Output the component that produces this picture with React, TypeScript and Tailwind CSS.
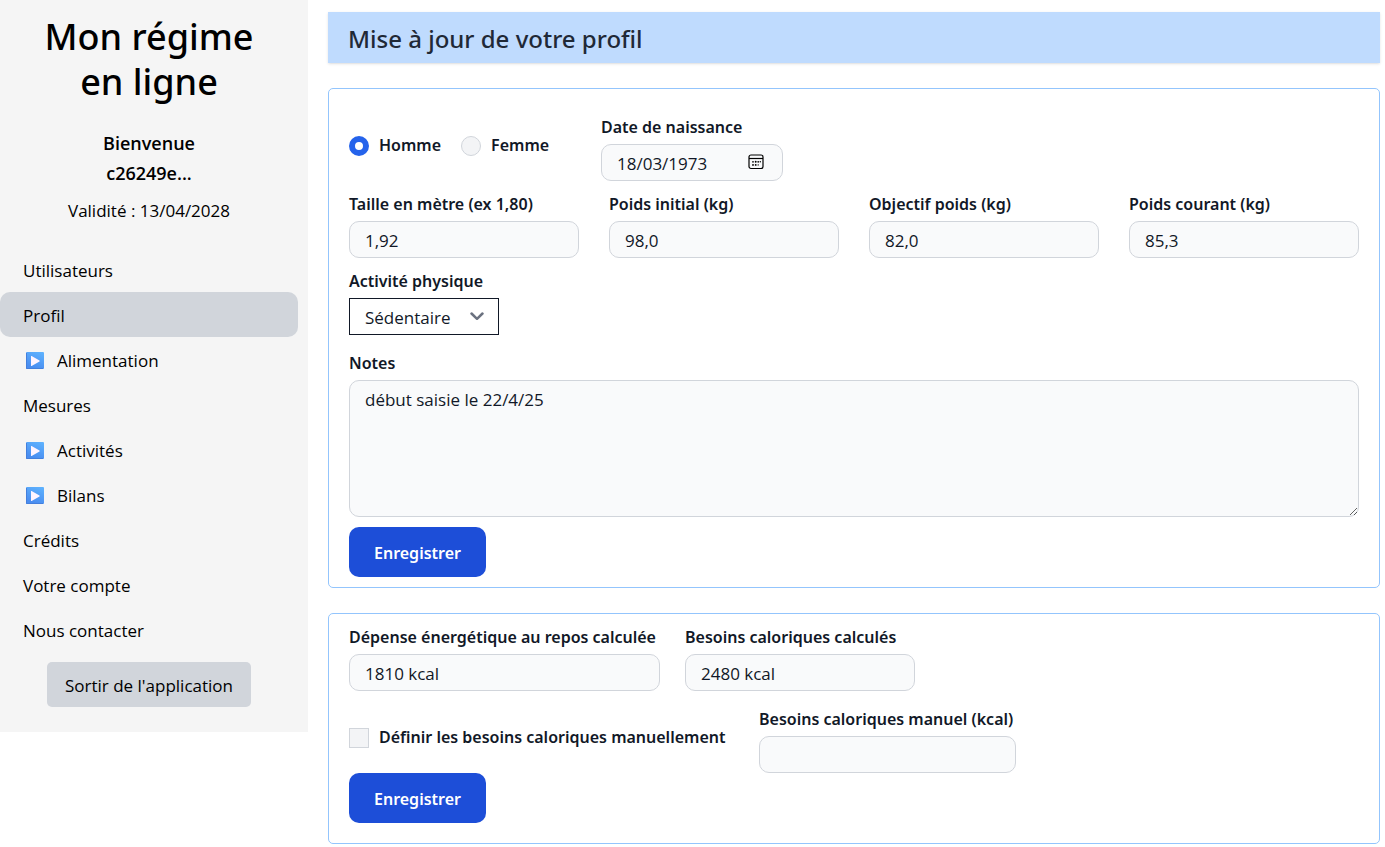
import React, { useState } from 'react';

const menuItems = [
  { label: 'Utilisateurs' },
  { label: 'Profil' },
  { label: 'Alimentation', hasSubMenu: true },
  { label: 'Mesures' },
  { label: 'Activités', hasSubMenu: true },
  { label: 'Bilans', hasSubMenu: true },
  { label: 'Crédits' },
  { label: 'Votre compte' },
  { label: 'Nous contacter' },
];

const inputClass =
  'block h-[37px] w-full rounded-[10px] border border-[#d1d5db] bg-[#f9fafb] px-[15px] pt-[2px] text-[17px] leading-[25px] text-[#111827]';
const labelClass =
  "mb-[3px] block whitespace-nowrap font-['Noto_Sans',sans-serif] text-[16px] leading-[27px] font-semibold text-[#111827]";
const checkLabelClass =
  "flex items-center gap-[10px] font-['Noto_Sans',sans-serif] text-[16px] leading-[25px] font-semibold text-[#111827]";

function PlayIcon() {
  return (
    <svg width="18" height="18" viewBox="0 0 18 18" aria-hidden="true">
      <defs>
        <linearGradient id="play" x1="1" y1="0" x2="0.6" y2="1">
          <stop offset="0" stopColor="#5fb4ff" />
          <stop offset="1" stopColor="#4a8df0" />
        </linearGradient>
      </defs>
      <rect width="18" height="17" rx="1" fill="url(#play)" />
      <path d="M0.5 1v15.500H17" fill="none" stroke="#447fdc" strokeWidth="1" />
      <path d="M5 4.300v9.400c0 .4.3.5.6.3l7.900-4.600c.3-.2.3-.6 0-.8L5.600 4c-.3-.2-.6 0-.6.3z" fill="#fff4ff" />
    </svg>
  );
}

function CalendarIcon() {
  return (
    <svg width="16" height="16" viewBox="0 0 16 16" fill="none" aria-hidden="true">
      <rect x="1" y="1" width="14" height="13.500" rx="2" stroke="#000" strokeWidth="1.200" />
      <path d="M1 4.500h14" stroke="#000" strokeWidth="1.200" />
      <g fill="#000">
        <circle cx="5" cy="7.800" r="0.850" />
        <circle cx="7.700" cy="7.800" r="0.950" />
        <circle cx="10.200" cy="7.800" r="0.850" />
        <circle cx="12.300" cy="7.800" r="0.700" />
        <circle cx="5" cy="10.900" r="0.950" />
        <circle cx="7.700" cy="10.900" r="0.950" />
        <circle cx="10.200" cy="10.900" r="0.700" />
      </g>
    </svg>
  );
}

interface FieldProps {
  id: string;
  label: string;
  value?: string;
  className: string;
}

function Field({ id, label, value = '', className }: FieldProps) {
  return (
    <div className={className}>
      <label htmlFor={id} className={labelClass}>{label}</label>
      <input id={id} type="text" defaultValue={value} className={inputClass} />
    </div>
  );
}

function SaveButton() {
  return (
    <button
      type="submit"
      className="block h-[50px] rounded-[10px] bg-[#1d4ed8] px-[25px] pt-[2px] font-['Noto_Sans',sans-serif] text-[16px] leading-[25px] font-semibold text-white hover:bg-blue-800"
    >
      Enregistrer
    </button>
  );
}

function Sidebar() {
  const [current, setCurrent] = useState('Profil');

  return (
    <aside className="w-[308px] shrink-0 bg-[#f5f5f5] pt-[14px] pr-[10px] pb-[25px] text-black">
      <h1 className="text-center font-['Noto_Sans',sans-serif] text-[36px] leading-[45px] font-medium">
        Mon régime<br />en ligne
      </h1>
      <div className="pt-6 pb-[10px] text-center text-[18px] leading-[30px] font-semibold">
        <p>Bienvenue</p>
        <p>c26249e...</p>
      </div>
      <p className="text-center text-[17px] leading-[25px]">Validité : 13/04/2028</p>
      <nav className="mt-6">
        {menuItems.map((item) => (
          <a
            key={item.label}
            href="#"
            onClick={() => setCurrent(item.label)}
            className={`flex h-[45px] items-center rounded-[10px] px-[23px] pt-[2px] text-[17px] ${current === item.label ? 'bg-[#d1d5db]' : ''}`}
          >
            {item.hasSubMenu && (
              <span className="mr-[13px] ml-[3px]">
                <PlayIcon />
              </span>
            )}
            {item.label}
          </a>
        ))}
      </nav>
      <button type="button" className="mx-auto mt-[10px] block h-[45px] rounded-[5px] bg-[#d1d5db] px-[18px] pt-[2px] text-[17px]">
        Sortir de l'application
      </button>
    </aside>
  );
}

export default function App() {
  const [sex, setSex] = useState('homme');
  const [manual, setManual] = useState(false);

  return (
    <div className="flex items-start bg-white font-['Open_Sans',sans-serif]">
      <Sidebar />

      <main className="min-w-0 flex-1 pt-3 pr-[5px] pl-5">
        <h2 className="bg-[#bfdbfe] px-5 pt-[11px] pb-[9px] font-['Noto_Sans',sans-serif] text-[24px] leading-[31px] font-medium text-[#1f2937] shadow-sm">
          Mise à jour de votre profil
        </h2>

        <form onSubmit={(e) => e.preventDefault()} className="mt-[25px] rounded-[5px] border border-[#93c5fd] px-5 pt-[25px] pb-[10px]">
          <div className="flex items-center">
            <div className="flex w-[252px] gap-5 pb-1">
              {['Homme', 'Femme'].map((name) => (
                <label key={name} className={checkLabelClass}>
                  <input
                    type="radio"
                    name="sexe"
                    checked={sex === name.toLowerCase()}
                    onChange={() => setSex(name.toLowerCase())}
                    className="size-5 appearance-none rounded-full border border-[#d1d5db] bg-[#f3f4f6] checked:border-[6px] checked:border-[#2563eb] checked:bg-white"
                  />
                  {name}
                </label>
              ))}
            </div>
            <div className="w-[182px]">
              <label htmlFor="naissance" className={labelClass}>Date de naissance</label>
              <div className="relative">
                <input id="naissance" type="text" defaultValue="18/03/1973" className={inputClass} />
                <button type="button" aria-label="Calendrier" className="absolute top-[10px] right-[19px]">
                  <CalendarIcon />
                </button>
              </div>
            </div>
          </div>

          <div className="mt-[10px] flex gap-[30px]">
            <Field id="taille" label="Taille en mètre (ex 1,80)" value="1,92" className="w-[230px]" />
            <Field id="initial" label="Poids initial (kg)" value="98,0" className="w-[230px]" />
            <Field id="objectif" label="Objectif poids (kg)" value="82,0" className="w-[230px]" />
            <Field id="courant" label="Poids courant (kg)" value="85,3" className="w-[230px]" />
          </div>

          <div className="mt-[10px]">
            <label htmlFor="activite" className={labelClass}>Activité physique</label>
            <div className="relative w-[150px]">
              <select
                id="activite"
                className="block h-[37px] w-full appearance-none border border-[#111827] bg-white px-[15px] pt-[2px] text-[17px] leading-[25px] text-[#111827]"
              >
                <option>Sédentaire</option>
                <option>Actif</option>
              </select>
              <svg className="pointer-events-none absolute top-[13px] right-[15px]" width="14" height="10" viewBox="0 0 14 10" fill="none" aria-hidden="true">
                <path d="M1.500 2.500 7 7.800 12.500 2.500" stroke="#6b7280" strokeWidth="2.500" strokeLinecap="round" strokeLinejoin="round" />
              </svg>
            </div>
          </div>

          <div className="mt-[15px]">
            <label htmlFor="notes" className={labelClass}>Notes</label>
            <textarea
              id="notes"
              defaultValue="début saisie le 22/4/25"
              className="block h-[137px] w-full rounded-[10px] border border-[#d1d5db] bg-[#f9fafb] px-[15px] py-[6px] text-[17px] leading-[25px] text-[#111827]"
            />
          </div>

          <div className="mt-[10px]">
            <SaveButton />
          </div>
        </form>

        <form onSubmit={(e) => e.preventDefault()} className="mt-[25px] rounded-[5px] border border-[#93c5fd] px-5 pt-[10px] pb-5">
          <div className="flex gap-[25px]">
            <Field id="depense" label="Dépense énergétique au repos calculée" value="1810 kcal" className="w-[311px]" />
            <Field id="besoins" label="Besoins caloriques calculés" value="2480 kcal" className="w-[230px]" />
          </div>

          <div className="mt-[15px] flex items-center">
            <div className="w-[410px] pb-1">
              <label className={checkLabelClass}>
                <input
                  type="checkbox"
                  checked={manual}
                  onChange={() => setManual(!manual)}
                  className="size-5 appearance-none border border-[#d1d5db] bg-[#f3f4f6] checked:bg-[#2563eb]"
                />
                Définir les besoins caloriques manuellement
              </label>
            </div>
            <Field id="manuel" label="Besoins caloriques manuel (kcal)" className="w-[257px]" />
          </div>

          <SaveButton />
        </form>
      </main>
    </div>
  );
}
